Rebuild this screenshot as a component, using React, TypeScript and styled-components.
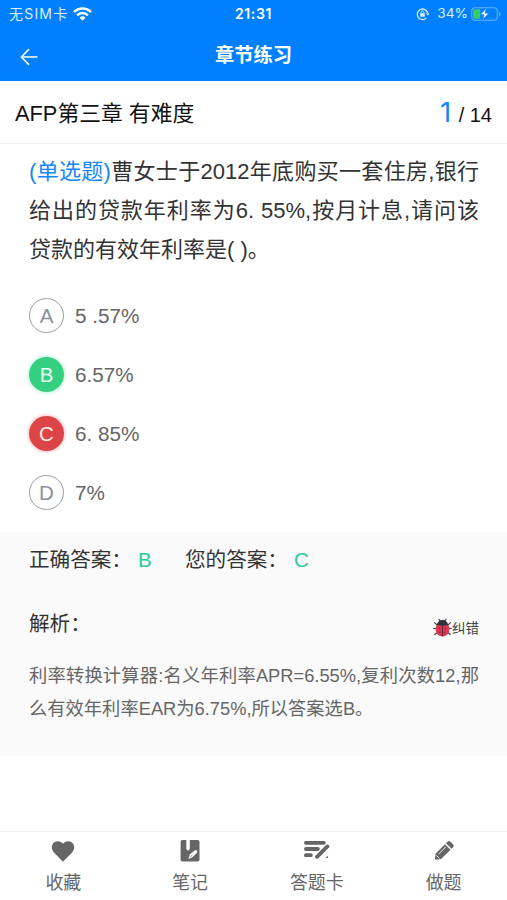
import React from "react";
import styled, { createGlobalStyle } from "styled-components";

const GlobalStyle = createGlobalStyle`
  * { box-sizing: border-box; }
  body {
    margin: 0;
    background: #fff;
    font-family: "Liberation Sans", "Noto Sans CJK SC", sans-serif;
    color: #333;
  }
`;

const Screen = styled.div`
  width: 507px;
  height: 900px;
  display: flex;
  flex-direction: column;
  overflow: hidden;
`;

const Header = styled.header`
  height: 81px;
  flex: none;
  background: #0080ff;
  color: #fff;
`;

const StatusBar = styled.div`
  height: 27px;
  display: grid;
  grid-template-columns: 1fr auto 1fr;
  align-items: center;
  padding: 0 6px 0 9px;
  font-family: Inter, "Noto Sans CJK SC", sans-serif;
  font-size: 14px;
  line-height: 27px;
`;

const StatusGroup = styled.div<{ $end?: boolean }>`
  display: flex;
  align-items: center;
  justify-content: ${(p) => (p.$end ? "flex-end" : "flex-start")};
  color: #dcedff;
`;

const Carrier = styled.span`
  letter-spacing: 1.2px;
  margin-right: 5px;
  white-space: nowrap;
`;

const Clock = styled.span`
  margin-right: 3px;
  font-weight: 600;
  font-size: 14px;
  letter-spacing: 0.6px;
`;

const Percent = styled.span`
  margin: 0 3px 0 7px;
  font-size: 13.7px;
`;

const NavBar = styled.div`
  height: 54px;
  display: grid;
  grid-template-columns: 60px 1fr 60px;
  align-items: center;
`;

const BackButton = styled.button`
  display: flex;
  padding: 4px 0 0 20px;
  border: 0;
  background: none;
  color: #fff;
`;

const NavTitle = styled.h1`
  margin: 0;
  padding-top: 2px;
  font-size: 19.3px;
  font-weight: 700;
  line-height: 54px;
  text-align: center;
`;

const ChapterBar = styled.div`
  height: 63px;
  flex: none;
  display: flex;
  align-items: center;
  justify-content: space-between;
  padding: 2px 15px 0;
  border-bottom: 1px solid #f0f0f0;
  color: #111;
`;

const ChapterName = styled.h2`
  margin: 0;
  padding-top: 2px;
  font-size: 21.8px;
  font-weight: 400;
  line-height: 60px;
`;

const Counter = styled.div`
  font-size: 20px;
  line-height: 60px;
  white-space: pre;
`;

const Current = styled.span`
  margin-right: 2px;
  font-family: Inter, sans-serif;
  font-size: 27.5px;
  color: #1687f8;
`;

const Question = styled.p`
  margin: 8px 28px 0 29px;
  font-size: 22px;
  line-height: 39px;
  text-align: justify;
`;

const Kind = styled.span`
  color: #1687f8;
`;

const Options = styled.ul`
  margin: 17px 0 0;
  padding: 0 29px;
  list-style: none;
`;

const Option = styled.li`
  height: 59px;
  display: flex;
  align-items: center;
  gap: 11px;
  font-size: 20.7px;
  color: #666;
`;

type Mark = "plain" | "right" | "wrong";

const markColors: Record<Mark, string> = {
  plain: "background: #fff; color: #8b8f9e; border: 1.5px solid #9a9daa;",
  right: "background: #35cf82; color: #e9fff3; box-shadow: 0 0 3px 2px #d5fae6;",
  wrong: "background: #dc4547; color: #ffecec; box-shadow: 0 0 2px 2px #fbdcdd;",
};

const Letter = styled.span<{ $mark: Mark }>`
  width: 35px;
  height: 35px;
  display: flex;
  align-items: center;
  justify-content: center;
  border-radius: 50%;
  font-size: 20.5px;
  line-height: 32px;
  ${(p) => markColors[p.$mark]}
`;

const Analysis = styled.section`
  height: 224px;
  flex: none;
  margin-top: 10px;
  padding: 8px 28px 0 29px;
  background: #fafafa;
`;

const Answers = styled.div`
  display: flex;
  height: 40px;
  font-size: 20.6px;
  line-height: 40px;
`;

const Answer = styled.div`
  width: 156px;
  display: flex;
  gap: 6px;
`;

const AnswerValue = styled.span`
  color: #2bcb94;
`;

const AnalysisHead = styled.div`
  display: flex;
  align-items: center;
  justify-content: space-between;
  margin-top: 24px;
  height: 40px;
  font-size: 20.6px;
  line-height: 40px;
`;

const Report = styled.button`
  display: flex;
  align-items: center;
  padding: 6px 0 0;
  border: 0;
  background: none;
  color: #444;
  font: 13.5px/20px "Noto Sans CJK SC", sans-serif;
`;

const Explanation = styled.p`
  margin: 15px 0 0;
  font-size: 18.3px;
  line-height: 33px;
  text-align: justify;
  color: #666;
`;

const TabBar = styled.nav`
  height: 69px;
  flex: none;
  margin-top: auto;
  display: grid;
  grid-template-columns: repeat(4, 1fr);
  border-top: 1px solid #f0f0f0;
`;

const Tab = styled.button`
  display: flex;
  flex-direction: column;
  align-items: center;
  padding: 5px 0 0;
  border: 0;
  background: none;
  color: #666;
  font: 18px/32px "Liberation Sans", "Noto Sans CJK SC", sans-serif;

  svg { margin-bottom: 2px; }
`;

const WifiIcon = () => (
  <svg width="19" height="14" viewBox="0 0 19 14" fill="none" stroke="#fff" strokeWidth="2.5">
    <path d="M1 5.1a12 12 0 0 1 17 0" />
    <path d="M4.1 8.3a7.7 7.7 0 0 1 10.8 0" />
    <path d="M9.5 13.7 6.5 10.7a4.3 4.3 0 0 1 6 0z" fill="#fff" stroke="none" />
  </svg>
);

const LockIcon = () => (
  <svg width="14" height="14" viewBox="0 0 14 14" fill="none" stroke="#dcedff" strokeWidth="1.3">
    <path d="M10.3 11.1A5.3 5.3 0 1 1 11.7 6" />
    <path d="m10 6.3 3.4-.1-1.8 2.6z" fill="#dcedff" stroke="none" />
    <rect x="4.2" y="6.3" width="4.6" height="3.5" rx=".5" fill="#dcedff" stroke="none" />
    <path d="M5.1 6.6V5.3a1.4 1.4 0 0 1 2.8 0v1.3" strokeWidth="1" />
  </svg>
);

const BatteryIcon = () => (
  <svg width="30" height="14" viewBox="0 0 30 14">
    <rect x=".7" y=".7" width="25.6" height="12.6" rx="3.5" fill="none" stroke="#66b1ff" strokeWidth="1.1" />
    <path d="M28 4.7c2 .7 2 4 0 4.7z" fill="#66b1ff" />
    <path d="M4 2.2h5v9.6H4A1.8 1.8 0 0 1 2.2 10V4A1.8 1.8 0 0 1 4 2.2z" fill="#35cf60" />
    <path d="M15.4 1.5 9.3 7.6h3.8l-1.4 5 6-6.3h-3.8z" fill="#fff" stroke="#0080ff" strokeWidth=".5" />
  </svg>
);

const BackIcon = () => (
  <svg width="18" height="18" viewBox="0 0 18 18" fill="none" stroke="currentColor" strokeWidth="1.5" strokeLinecap="round" strokeLinejoin="round">
    <path d="M17 9H1.3M8.6 1.6 1.3 9l7.3 7.4" />
  </svg>
);

const BugIcon = () => (
  <svg width="19" height="19" viewBox="0 0 19 19">
    <path d="m5.6 1 2 2.4M13.4 1l-2 2.4M1.2 4.3l3.3 3M17.8 4.3l-3.3 3M.3 10.5h4M18.7 10.5h-4M1.4 16.7l3.2-2.4M17.6 16.7l-3.2-2.4" stroke="#3b3440" strokeWidth="1.1" />
    <ellipse cx="9.5" cy="11" rx="7" ry="7.4" fill="#df3654" />
    <path d="M3.8 7.1C4.2 4 6.5 2 9.5 2s5.3 2 5.7 5.1c-3.5 1-7.9 1-11.4 0z" fill="#30323c" />
    <path d="M9.5 7v11.3" stroke="#5d2635" strokeWidth="1" />
    <g fill="#9b2842">
      <circle cx="6.5" cy="10.3" r=".9" />
      <circle cx="12.5" cy="10.3" r=".9" />
      <circle cx="6.8" cy="14.4" r=".8" />
      <circle cx="12.2" cy="14.4" r=".8" />
    </g>
  </svg>
);

const HeartIcon = () => (
  <svg width="24" height="28" viewBox="0 0 24 28" fill="currentColor">
    <path d="M12 24.7 3.4 16C-.4 12 .3 7.5 3.4 5.3 6.4 3.3 10 4 12 6.7c2-2.7 5.6-3.4 8.6-1.4 3.1 2.2 3.8 6.7 0 10.7z" />
  </svg>
);

const NoteIcon = () => (
  <svg width="20" height="28" viewBox="0 0 20 28">
    <path d="M2.3 3h4v9l1.7 1.8L9.8 12V3h8a1.7 1.7 0 0 1 1.7 1.7v18a1.7 1.7 0 0 1-1.7 1.7H2.3a1.7 1.7 0 0 1-1.7-1.7v-18A1.7 1.7 0 0 1 2.3 3z" fill="currentColor" />
    <path d="m8.3 22 1.5-4.4 4.8-4.1c2.5-.9 3.3.3 2.1 2.5l-4.5 4.4z" fill="#fff" />
    <path d="m9.7 20.7 3-3" stroke="currentColor" strokeWidth=".6" />
  </svg>
);

const SheetIcon = () => (
  <svg width="27" height="28" viewBox="0 0 27 28" fill="none" stroke="currentColor" strokeWidth="3.8">
    <path d="M2.9 5.8h18" strokeLinecap="round" />
    <path d="M2.9 12h12M2.9 18.2h5" strokeLinecap="round" />
    <path d="M25.2 8.8 13.5 20.5" stroke="#fff" strokeWidth="6" />
    <path d="M24.4 9.4 14 19.8" strokeLinecap="round" />
    <path d="m22.4 21 2.5-2.3v2.3z" fill="currentColor" stroke="none" />
  </svg>
);

const PencilIcon = () => (
  <svg width="20" height="28" viewBox="0 0 20 28">
    <path d="M.8 22.8 1.7 16.6 11 7.2l5.5 5.5-9.4 9.4z" fill="currentColor" />
    <path d="m12 6.2 1.5-1.5c1-.9 2-.9 3 0l2.5 2.5c.9 1 .9 2 0 3l-1.5 1.5z" fill="currentColor" />
    <path d="m4.6 17.1 7.2-7.2M2.4 18.4l2.8 2.9" stroke="#fff" strokeWidth=".9" />
  </svg>
);

const options: { letter: string; text: string; mark: Mark }[] = [
  { letter: "A", text: "5 .57%", mark: "plain" },
  { letter: "B", text: "6.57%", mark: "right" },
  { letter: "C", text: "6. 85%", mark: "wrong" },
  { letter: "D", text: "7%", mark: "plain" },
];

const tabs = [
  { label: "收藏", Icon: HeartIcon },
  { label: "笔记", Icon: NoteIcon },
  { label: "答题卡", Icon: SheetIcon },
  { label: "做题", Icon: PencilIcon },
];

export default function App() {
  return (
    <Screen lang="zh-CN">
      <GlobalStyle />
      <Header>
        <StatusBar>
          <StatusGroup>
            <Carrier>无SIM卡</Carrier>
            <WifiIcon />
          </StatusGroup>
          <Clock>21:31</Clock>
          <StatusGroup $end>
            <LockIcon />
            <Percent>34%</Percent>
            <BatteryIcon />
          </StatusGroup>
        </StatusBar>
        <NavBar>
          <BackButton aria-label="返回">
            <BackIcon />
          </BackButton>
          <NavTitle>章节练习</NavTitle>
        </NavBar>
      </Header>
      <ChapterBar>
        <ChapterName>AFP第三章 有难度</ChapterName>
        <Counter>
          <Current>1</Current> / 14
        </Counter>
      </ChapterBar>
      <Question>
        <Kind>(单选题)</Kind>曹女士于2012年底购买一套住房,银行给出的贷款年利率为6. 55%,按月计息,请问该贷款的有效年利率是( )。
      </Question>
      <Options>
        {options.map((o) => (
          <Option key={o.letter}>
            <Letter $mark={o.mark}>{o.letter}</Letter>
            <span>{o.text}</span>
          </Option>
        ))}
      </Options>
      <Analysis>
        <Answers>
          <Answer>
            正确答案：<AnswerValue>B</AnswerValue>
          </Answer>
          <Answer>
            您的答案：<AnswerValue>C</AnswerValue>
          </Answer>
        </Answers>
        <AnalysisHead>
          <span>解析：</span>
          <Report>
            <BugIcon />
            纠错
          </Report>
        </AnalysisHead>
        <Explanation>
          利率转换计算器:名义年利率APR=6.55%,复利次数12,那么有效年利率EAR为6.75%,所以答案选B。
        </Explanation>
      </Analysis>
      <TabBar>
        {tabs.map(({ label, Icon }) => (
          <Tab key={label}>
            <Icon />
            {label}
          </Tab>
        ))}
      </TabBar>
    </Screen>
  );
}
